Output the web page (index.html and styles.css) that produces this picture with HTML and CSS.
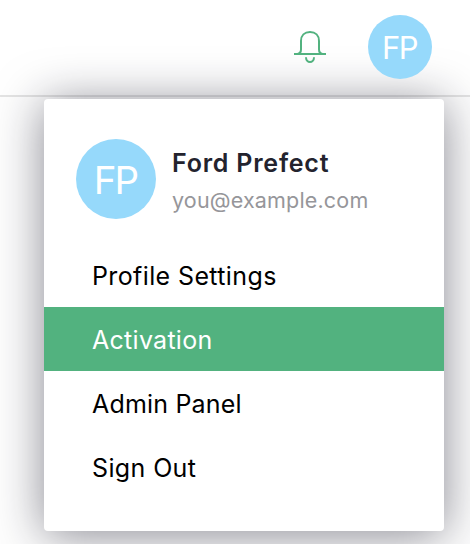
FILE: index.html
```
<!DOCTYPE html>
<html lang="en">
<head>
<meta charset="utf-8">
<title>Account menu</title>
<link rel="stylesheet" href="styles.css">
</head>
<body>
<header class="topbar">
  <svg class="bell" viewBox="0 0 32 34" fill="none" stroke="currentColor" stroke-width="2"><path d="M0 24H32M3.5 24C6 23.5 7 22 7 19.5V11C7 5.5 10.5 2 16 2S25 5.5 25 11V19.5C25 22 26 23.5 28.5 24M12 27.2C12 33.6 20 33.6 20 27.2"/></svg>
  <div class="avatar avatar-small"><span>FP</span></div>
</header>
<div class="menu">
  <div class="profile">
    <div class="avatar avatar-large"><span>FP</span></div>
    <div class="identity">
      <div class="name">Ford Prefect</div>
      <div class="email">you@example.com</div>
    </div>
  </div>
  <nav class="links">
    <a class="link">Profile Settings</a>
    <a class="link active">Activation</a>
    <a class="link admin">Admin Panel</a>
    <a class="link">Sign Out</a>
  </nav>
</div>
</body>
</html>
```

FILE: styles.css
```
* { box-sizing: border-box; }
body { margin: 0; height: 544px; overflow: hidden; background: #fefefe; font-family: Inter, "Liberation Sans", sans-serif; }
.topbar { height: 97px; padding: 15px 38px 0 294px; display: flex; justify-content: space-between; align-items: flex-start; background: #fff; border-bottom: 2px solid #e4e4e4; }
.bell { width: 32px; height: 34px; margin-top: 15px; color: #52b27f; }
.avatar { display: flex; align-items: center; justify-content: center; flex: none; border-radius: 50%; background: #96d9fb; color: #fff; font-weight: 370; }
.avatar-small { width: 64px; height: 64px; padding: 1px 1px 0 0; font-size: 31px; letter-spacing: -1.6px; }
.avatar-large { width: 80px; height: 80px; padding: 2px 1px 0 0; font-size: 38.5px; letter-spacing: -1.8px; }
.menu { width: 400px; height: 432px; margin: 2px 0 0 44px; padding-top: 40px; border-radius: 4px; background: #fff; box-shadow: 0 4px 48px rgba(20, 20, 37, .5); }
.profile { display: flex; gap: 16px; padding-left: 32px; height: 104px; }
.identity { padding-top: 8px; }
.name { font-size: 25px; line-height: 32px; font-weight: 600; letter-spacing: .78px; color: #23232e; }
.email { margin-top: 6px; font-size: 21.5px; line-height: 30px; letter-spacing: .17px; color: #96969a; }
.link { display: flex; align-items: center; height: 64px; padding: 2px 0 0 48px; font-size: 25px; letter-spacing: .38px; color: #000; white-space: nowrap; }
.active { background: #52b27f; color: #fff; letter-spacing: .28px; }
.admin { letter-spacing: .18px; }
```
